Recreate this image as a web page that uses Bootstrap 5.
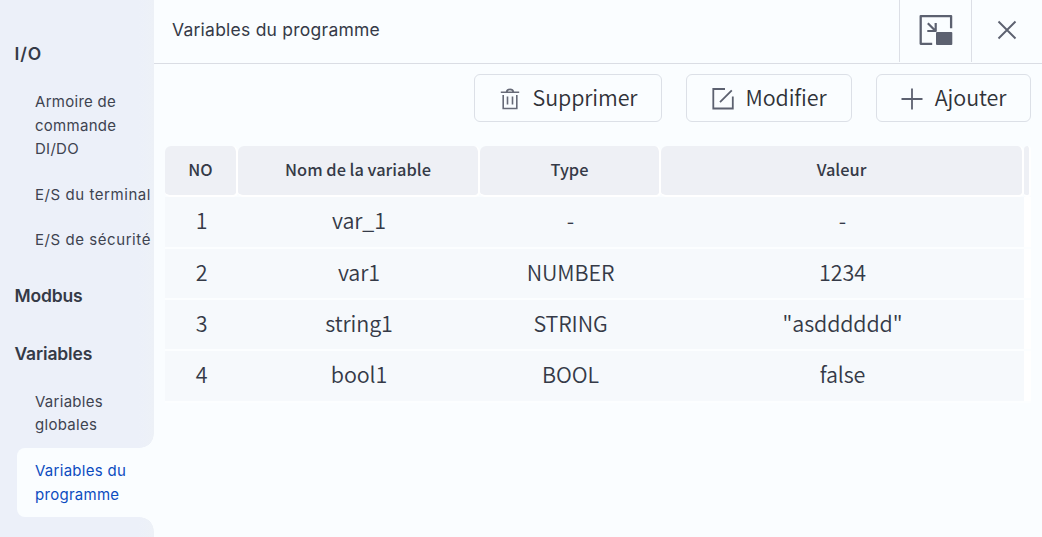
<!DOCTYPE html>
<html lang="fr">
<head>
<meta charset="utf-8">
<meta name="viewport" content="width=device-width, initial-scale=1">
<title>Variables du programme</title>
<link href="https://cdn.jsdelivr.net/npm/bootstrap@5.3.0/dist/css/bootstrap.min.css" rel="stylesheet">
<style>
body{background:#fafdff;color:#353a47;font-family:"Noto Sans CJK SC",sans-serif;height:537px}
.side{width:154px;background:linear-gradient(90deg,#ecf0f9 0 138px,#edf1f7 154px);padding-top:29px;font-family:Inter,"Liberation Sans",sans-serif}
.grp{height:50px;padding-left:14.5px;font-size:17.5px;font-weight:600;letter-spacing:-.15px;white-space:nowrap}
.grp.wide{letter-spacing:.9px}
.grp.next{margin-top:8px}
.side .nav-link{padding:11px 0 11px 35px;font-size:15px;line-height:23.6px;letter-spacing:.28px;color:#3e4350;white-space:nowrap}
.side .nav-link.spaced{letter-spacing:.56px}
.side .nav-link.tight{line-height:23.2px;padding-bottom:11.8px}
.side .nav-link.active{position:relative;margin-left:17px;padding-left:18px;background:#fafdff;color:#0c4cc0;border-radius:8px 0 0 8px}
.side .nav-link.active::before,.side .nav-link.active::after{content:"";position:absolute;right:0;width:14px;height:14px}
.side .nav-link.active::before{top:-14px;background:radial-gradient(ellipse 14px 14px at 0 0,transparent 96%,#fafdff 100%)}
.side .nav-link.active::after{bottom:-14px;background:radial-gradient(ellipse 14px 14px at 0 100%,transparent 96%,#fafdff 100%)}
.top-bar{height:64px;border-bottom:1px solid #dadde4;padding-left:18px}
.top-bar h1{font:400 17.5px/1 Inter,"Liberation Sans",sans-serif;letter-spacing:.24px;padding-bottom:3px}
.tool{border:0;border-left:1px solid #dcdfe6;background:none;padding:0;width:72px;height:62px}
.tool svg{margin:0 0 2px}
.tool.last{width:71px}
.actions{padding:10px 11px 0 0;gap:24px}
.act{height:48px;border:1px solid #dce0e7;border-radius:6px;padding:0 1px 0 0;font-size:21.5px;font-weight:350;letter-spacing:-.1px;line-height:44px;color:#303238;background:#fafdff}
.act span{padding-bottom:2px;margin-left:3px}
.act svg{margin-top:1px}
.act:hover{background:#f0f4f9}
.vars{width:866px;margin:24px 0 0 11px;table-layout:fixed;border-collapse:separate;border-spacing:0;text-align:center}
.vars th{height:51px;padding:0 0 3px;border:solid #fff;border-width:0 2px 2px 0;background:#eef0f5;background-clip:padding-box;border-radius:6px 6px 5px 5px;font-size:16.4px;font-weight:500;line-height:24px}
.vars td{height:51px;padding:0 0 3px;border-bottom:2px solid #fcfeff;background:#f6f9fc;font-size:21.5px;font-weight:350;letter-spacing:-.1px;line-height:30px}
.vars tbody tr:first-child td,.vars tbody tr:last-child td{height:52px;padding-bottom:5px}
.vars td:last-child{background:#fff}
</style>
</head>
<body>
<div class="d-flex h-100 overflow-hidden">
  <nav class="side flex-shrink-0">
    <div class="grp wide d-flex align-items-center">I/O</div>
    <div class="nav flex-column">
      <a class="nav-link" href="#">Armoire de<br>commande<br>DI/DO</a>
      <a class="nav-link spaced" href="#">E/S du terminal</a>
      <a class="nav-link spaced" href="#">E/S de sécurité</a>
    </div>
    <div class="grp next d-flex align-items-center">Modbus</div>
    <div class="grp next d-flex align-items-center">Variables</div>
    <div class="nav flex-column">
      <a class="nav-link tight" href="#">Variables<br>globales</a>
      <a class="nav-link active" href="#">Variables du<br>programme</a>
    </div>
  </nav>
  <main class="flex-grow-1">
    <header class="top-bar d-flex align-items-start">
      <h1 class="mb-0 me-auto align-self-center">Variables du programme</h1>
      <button class="tool d-flex align-items-center justify-content-center" aria-label="Réduire">
        <svg width="34" height="32" viewBox="0 0 34 32" fill="none" stroke="#5c6170" stroke-width="2.3" stroke-linejoin="round"><path d="M13.2 29.8H1.7V2.1h30.4V14.2"/><path d="M8.8 9.3l7.5 7.5M8.3 17h8.4V9" stroke-width="2.2"/><rect x="17" y="18" width="16.3" height="13" rx="1" fill="#5c6170" stroke="none"/></svg>
      </button>
      <button class="tool last d-flex align-items-center justify-content-center" aria-label="Fermer">
        <svg width="20" height="20" viewBox="0 0 20 20" fill="none" stroke="#5c6170" stroke-width="1.9"><path d="M1.5 1.5l17 17M18.5 1.5l-17 17"/></svg>
      </button>
    </header>
    <div class="actions d-flex justify-content-end">
      <button class="act d-flex align-items-center justify-content-center" style="width:188px">
        <svg class="me-2" width="24" height="24" viewBox="0 0 24 24" fill="none" stroke="#666a77" stroke-width="1.6"><path d="M2.8 5.3h18.4M8.5 5c.4-1.7 1.8-2.6 3.5-2.6s3.100.9 3.500 2.600M5.200 8v13.500h13.600V8M9.500 9.500v8M14.500 9.500v8"/></svg><span>Supprimer</span>
      </button>
      <button class="act d-flex align-items-center justify-content-center" style="width:166px">
        <svg class="me-2" width="24" height="24" viewBox="0 0 24 24" fill="none" stroke="#5c6170" stroke-width="1.8"><path d="M14 2H2.300v19.500h19.500V9.500M9 15.200L20.800 3.400"/></svg><span>Modifier</span>
      </button>
      <button class="act d-flex align-items-center justify-content-center" style="width:155px">
        <svg class="me-2" width="24" height="24" viewBox="0 0 24 24" fill="none" stroke="#5c6170" stroke-width="1.8"><path d="M12 1.500v21M1.500 12h21"/></svg><span>Ajouter</span>
      </button>
    </div>
    <table class="vars">
      <colgroup><col style="width:73px"><col style="width:242px"><col style="width:181px"><col style="width:363px"><col style="width:7px"></colgroup>
      <thead><tr><th>NO</th><th>Nom de la variable</th><th>Type</th><th>Valeur</th><th></th></tr></thead>
      <tbody>
        <tr><td>1</td><td>var_1</td><td>-</td><td>-</td><td></td></tr>
        <tr><td>2</td><td>var1</td><td>NUMBER</td><td>1234</td><td></td></tr>
        <tr><td>3</td><td>string1</td><td>STRING</td><td>"asdddddd"</td><td></td></tr>
        <tr><td>4</td><td>bool1</td><td>BOOL</td><td>false</td><td></td></tr>
      </tbody>
    </table>
  </main>
</div>
<script src="https://cdn.jsdelivr.net/npm/bootstrap@5.3.0/dist/js/bootstrap.bundle.min.js"></script>
</body>
</html>
